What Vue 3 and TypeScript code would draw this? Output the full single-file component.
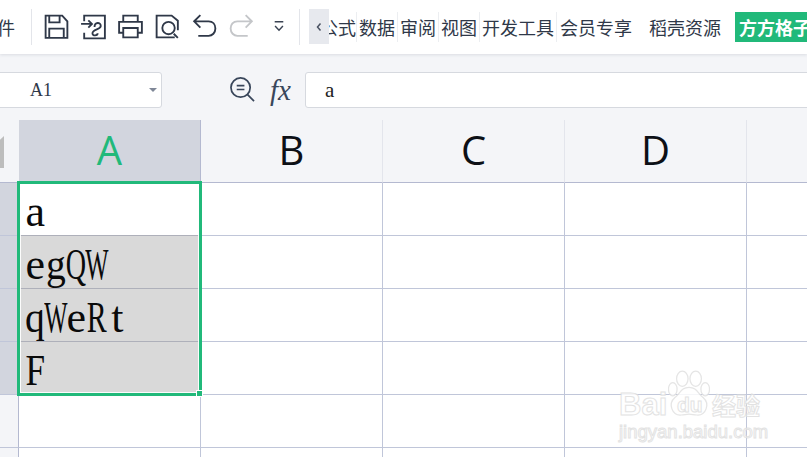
<script setup lang="ts">
type Ch = { c: string; k: string }
const squeeze: Record<string, string> = { W: 'x56', Q: 'x64', R: 'x68', F: 'x80', g: 'x90', q: 'x90' }
const w = (s: string): Ch[] => [...s].map((c) => ({ c, k: squeeze[c] ?? '' }))
const rows = [
  { text: w('a'), cls: 'active' },
  { text: w('egQW'), cls: 'sel' },
  { text: w('qWeRt'), cls: 'sel' },
  { text: w('F'), cls: 'sel' },
  { text: [] as Ch[], cls: '' },
  { text: [] as Ch[], cls: '' },
]
const tabs = ['数据', '审阅', '视图', '开发工具']
const heads = ['A', 'B', 'C', 'D', '']
</script>

<template>
  <div class="page">
    <header class="toolbar">
      <span class="file">件</span>
      <span class="sep first"></span>
      <div class="tools">
        <span class="tool"><svg viewBox="0 0 28 28"><path d="M3.500 3.500h16l5 5.500v16h-21z M7 25v-9h14v9 M7 4v6h10V4" /></svg></span>
        <span class="tool"><svg viewBox="0 0 28 28"><path d="M5 9V3.500h20v22H5V20 M2 11.500h10 M9 8l3.500 3.500L9 15 M15 14.500c0-5 6-5 6-1 0 3.500-8 3-8 7 0 3 5 2.500 5 0" /></svg></span>
        <span class="tool"><svg viewBox="0 0 28 28"><path d="M7 9V3.500h14V9 M7 20H3V9.500h22V20h-4 M7 15.500h14v9H7z" /></svg></span>
        <span class="tool"><svg viewBox="0 0 28 28"><path d="M21 24.500H3.500v-21H18l6 5v9 M24 25l-4-4" /><circle cx="15" cy="15.500" r="6" /></svg></span>
        <span class="tool"><svg viewBox="0 0 28 28"><path d="M10 3L4 9l6 6 M4 9h14c4 0 6.500 3 6.500 7s-3 7-6.500 7H8" /></svg></span>
        <span class="tool off"><svg viewBox="0 0 28 28"><path d="M18 3l6 6-6 6 M24 9H10c-4 0-6.500 3-6.500 7s3 7 6.500 7h10" /></svg></span>
        <span class="tool small"><svg viewBox="0 0 28 28"><path d="M8 8h12 M8.500 14l5.500 6 5.500-6" /></svg></span>
      </div>
      <span class="sep"></span>
      <span class="back"><svg viewBox="0 0 8 10"><path d="M5.500 1.500L2.500 5l3 3.500" /></svg></span>
      <div class="ribbon">
        <span class="tab clip"><span>公式</span></span>
        <span v-for="t in tabs" :key="t" class="tab">{{ t }}</span>
        <span class="tab plain">会员专享</span>
        <span class="tab far">稻壳资源</span>
        <span class="badge">方方格子</span>
      </div>
    </header>

    <section class="fbar">
      <div class="namebox">
        <span class="ref">A1</span>
        <i class="caret"></i>
      </div>
      <svg class="zoom" viewBox="0 0 26 26"><circle cx="11" cy="11" r="10" /><path d="M7 9h8 M7 13h8 M18 18l7 7" /></svg>
      <span class="fx">fx</span>
      <div class="input">a</div>
    </section>

    <section class="sheet">
      <div class="grid">
        <div class="corner"><i class="tri"></i></div>
        <div v-for="(h, i) in heads" :key="i" class="head" :class="{ on: h === 'A' }">{{ h }}</div>
        <template v-for="(r, ri) in rows" :key="ri">
          <div class="rowhead" :class="{ on: ri < 4 }"></div>
          <div class="cell" :class="r.cls">
            <span class="val"><span v-for="(ch, ci) in r.text" :key="ci" class="ch"><span :class="ch.k">{{ ch.c }}</span></span></span>
          </div>
          <div v-for="n in 4" :key="n" class="cell"></div>
        </template>
      </div>
      <div class="selection"><i class="handle"></i></div>
      <div class="watermark">
        <svg class="paw" viewBox="0 0 44 50">
          <ellipse cx="15" cy="9" rx="6" ry="8" /><ellipse cx="29" cy="9" rx="6" ry="8" />
          <ellipse cx="5" cy="20" rx="4.500" ry="7" /><ellipse cx="39" cy="20" rx="4.500" ry="7" />
          <path d="M22 18c8 0 9 6 15 11 7 6 3 19-7 18-3 0-5-1-8-1s-5 1-8 1c-10 1-14-12-7-18 6-5 7-11 15-11z" />
        </svg>
        <span class="wm bai">Bai</span>
        <span class="wm du">du</span>
        <span class="wm jy">经验</span>
        <span class="wm url">jingyan.baidu.com</span>
      </div>
    </section>
  </div>
</template>

<style>
html, body { margin: 0; background: #fff; overflow: hidden; }
</style>

<style scoped>
.page { width: 807px; height: 457px; overflow: hidden; position: relative; font-family: "Noto Sans CJK SC", "Noto Sans", sans-serif; color: #2f3848; background: #f4f5f8; }
.toolbar { height: 54px; background: #fff; display: flex; align-items: center; box-shadow: 0 1px 3px rgba(40, 50, 70, .12); position: relative; z-index: 2; }
.file { width: 31px; margin-left: -3px; font-size: 18px; line-height: 54px; flex: none; }
.sep { width: 1px; height: 36px; background: #e3e5ea; flex: none; margin-top: -1px; }
.sep.first { margin-left: 3px; }
.tools { display: flex; width: 267px; padding-left: 6px; box-sizing: border-box; flex: none; }
.tool { width: 37px; height: 30px; display: flex; align-items: center; justify-content: center; flex: none; margin-top: -2px; }
.tool svg { width: 29px; height: 29px; fill: none; stroke: #2f3848; stroke-width: 1.800; }
.tool.off svg { stroke: #c4c6c9; }
.tool.small svg { width: 20px; height: 20px; stroke: #3a4353; stroke-width: 2; }
.back { width: 20px; height: 35px; margin-left: 9px; background: #e7e9ee; display: flex; align-items: center; justify-content: center; flex: none; margin-top: -1px; }
.back svg { width: 8px; height: 10px; fill: none; stroke: #4a5262; stroke-width: 1.500; }
.ribbon { display: flex; align-items: center; flex: none; margin-top: -1px; }
.tab { font-size: 18px; line-height: 30px; height: 30px; padding: 0 2px; border-right: 1px solid #eceef1; white-space: nowrap; flex: none; }
.tab.clip { width: 27px; overflow: hidden; padding: 0; display: flex; justify-content: flex-end; }
.tab.plain { border: 0; padding-left: 3px; }
.tab.far { border: 0; padding: 0; margin-left: 15px; }
.badge { background: #21b97a; color: #fff; font-weight: 700; font-size: 18px; line-height: 30px; height: 30px; padding: 0 4px; margin-left: 14px; white-space: nowrap; flex: none; }
.fbar { height: 66px; display: flex; align-items: flex-start; box-sizing: border-box; padding-top: 18px; }
.namebox { width: 168px; height: 36px; margin-left: -6px; padding: 0 3px 0 35px; box-sizing: border-box; flex: none; background: #fff; border: 1px solid #d6d9df; border-radius: 3px; display: flex; align-items: center; justify-content: space-between; }
.ref { font-family: "Liberation Serif", serif; font-size: 18px; }
.caret { width: 0; height: 0; border: 4px solid transparent; border-top: 4px solid #7f8797; border-bottom: 0; margin-right: 1px; }
.zoom { width: 25px; height: 25px; margin: 5px 0 0 68px; fill: none; stroke: #39465a; stroke-width: 1.800; flex: none; }
.fx { font-family: "Liberation Serif", serif; font-style: italic; font-size: 29px; line-height: 36px; width: 24px; margin-left: 15px; color: #39465a; flex: none; }
.input { flex: none; width: 520px; height: 36px; margin-left: 11px; box-sizing: border-box; padding-left: 19px; background: #fff; border: 1px solid #d6d9df; border-radius: 3px; font-family: "Liberation Serif", serif; font-size: 21px; line-height: 34px; color: #222; }
.sheet { position: relative; height: 337px; overflow: hidden; }
.grid { display: grid; grid-template-columns: 19px repeat(4, 182px) 80px; grid-template-rows: 63px repeat(6, 53px); background: #fff; }
.corner { background: #f4f5f8; border-bottom: 1px solid #b4b9d0; position: relative; }
.tri { position: absolute; left: 0; top: 16px; width: 4px; height: 32px; background: #bdbdbd; clip-path: polygon(100% 0, 100% 100%, 0 100%, 0 12%); }
.head { background: #f4f5f8; border-bottom: 1px solid #b4b9d0; border-right: 1px solid #e3e5ec; font-family: "Open Sans", sans-serif; font-size: 40px; line-height: 60px; text-align: center; color: #0d1016; }
.head.on { background: #d2d5de; color: #21b97a; border-right-color: #b4b9d0; }
.rowhead { background: #f4f5f8; border-bottom: 1px solid #c0c6d9; border-right: 1px solid #b4b9d0; }
.rowhead.on { background: #d2d5de; }
.cell { background: #fff; border-bottom: 1px solid #c0c6d9; border-right: 1px solid #c0c6d9; position: relative; }
.cell.sel { background: #d9d9d9; border-bottom-color: #aeb0ba; }
.cell.active { border-bottom-color: #aeb0ba; }
.val { position: absolute; left: 6px; bottom: -2px; display: flex; font-family: "Liberation Serif", serif; font-size: 44px; line-height: 50px; color: #0a0a0a; }
.ch { width: 20.500px; display: flex; justify-content: center; flex: none; }
.x56, .x64, .x68, .x80, .x90 { display: inline-block; }
.x56 { transform: scaleX(.56); }
.x64 { transform: scaleX(.64); }
.x68 { transform: scaleX(.68); }
.x80 { transform: scaleX(.8); }
.x90 { transform: scaleX(.9); }
.selection { position: absolute; left: 17px; top: 61px; width: 185px; height: 215px; box-sizing: border-box; border: 3px solid #21b97a; box-shadow: inset 0 0 0 1px rgba(255, 255, 255, .9); pointer-events: none; }
.handle { position: absolute; right: -4px; bottom: -4px; width: 5px; height: 5px; background: #21b97a; border: 1px solid #fff; }
.watermark { position: absolute; left: 618px; top: 250px; width: 146px; height: 86px; opacity: .85; }
.paw { position: absolute; left: 50px; top: 0; width: 42px; height: 48px; fill: #fff; stroke: #e1e1e1; stroke-width: 1.300; }
.wm { position: absolute; color: #fff; -webkit-text-stroke: 1px #dedede; font-family: "Liberation Sans", sans-serif; font-weight: 700; white-space: nowrap; }
.bai { left: 1px; top: 17px; font-size: 31px; line-height: 36px; }
.du { left: 59px; top: 24px; font-size: 21px; line-height: 22px; }
.jy { left: 94px; top: 20px; font-family: "Noto Sans CJK SC", sans-serif; font-size: 24px; line-height: 30px; }
.url { left: 1px; top: 52px; font-size: 18.500px; font-weight: 400; line-height: 20px; }
</style>
